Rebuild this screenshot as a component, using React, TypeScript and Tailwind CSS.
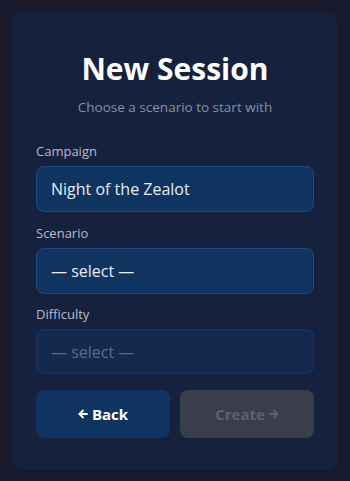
import React, { useState } from 'react';

function Arrow({ dir }: { dir: 'left' | 'right' }) {
  return (
    <svg width="10" height="10" viewBox="0 0 10 10" fill="none" stroke="currentColor" strokeWidth="1.8" strokeLinecap="round" strokeLinejoin="round">
      {dir === 'left' ? (
        <>
          <path d="M9 5H1.5" />
          <path d="M5 1.5L1.5 5L5 8.5" />
        </>
      ) : (
        <>
          <path d="M1 5h7.5" />
          <path d="M5 1.5L8.5 5L5 8.5" />
        </>
      )}
    </svg>
  );
}

export default function App() {
  const [campaign] = useState('Night of the Zealot');

  return (
    <div
      className="min-h-screen w-full bg-[#1a1a2e] p-3"
      style={{ fontFamily: '"Open Sans", "Noto Sans", sans-serif' }}
    >
      <div className="rounded-xl bg-[#16213e] px-6 pt-[37px] pb-8">
        <h1 className="text-center text-[30px] font-bold leading-[40px] text-white">New Session</h1>
        <p className="mt-[8px] text-center text-[13.5px] text-[#8a8fa3]">Choose a scenario to start with</p>

        <div className="mt-[25px] flex flex-col">
          <label className="text-[13px] leading-[18px] text-[#b6bccb]">Campaign</label>
          <div className="mt-[6px] flex h-[46px] items-center rounded-lg border border-[#1c4a80] bg-[#0f3460] px-[14px] text-[16px] text-[#e8ecf4]">
            {campaign}
          </div>

          <label className="mt-[12px] text-[13px] leading-[18px] text-[#b6bccb]">Scenario</label>
          <div className="mt-[6px] flex h-[46px] items-center rounded-lg border border-[#1c4a80] bg-[#0f3460] px-[14px] text-[16px] text-[#e8ecf4]">
            — select —
          </div>

          <label className="mt-[11px] text-[13px] leading-[18px] text-[#b6bccb]">Difficulty</label>
          <div className="mt-[6px] flex h-[45px] items-center rounded-lg border border-[#1a3560] bg-[#132a4e] px-[14px] text-[16px] text-[#5a6a86]">
            — select —
          </div>

          <div className="mt-[16px] grid grid-cols-2 gap-[10px]">
            <button className="flex h-[48px] items-center justify-center gap-[4px] rounded-lg bg-[#0f3460] text-[15px] font-bold text-white">
              <Arrow dir="left" />
              Back
            </button>
            <button disabled className="flex h-[48px] items-center justify-center gap-[4px] rounded-lg bg-[#3a3e4a] text-[15px] font-bold text-[#5c6170]">
              Create
              <Arrow dir="right" />
            </button>
          </div>
        </div>
      </div>
    </div>
  );
}
